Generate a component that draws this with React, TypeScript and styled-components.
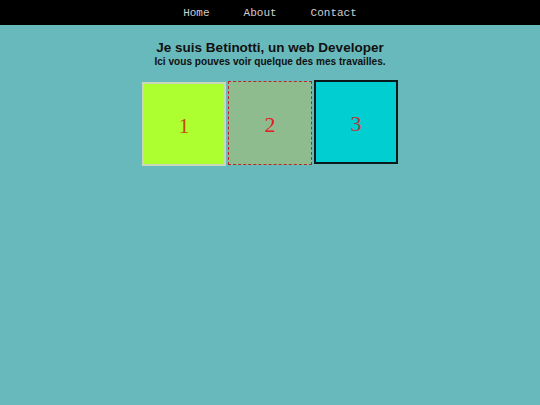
import React from "react";
import styled, { createGlobalStyle } from "styled-components";

const Global = createGlobalStyle`
  html, body { margin: 0; padding: 0; }
  body { background: #68b9bb; font-family: "Liberation Sans", Arial, sans-serif; }
`;

const Header = styled.header`
  background: #000;
  height: 25px;
  display: flex;
  justify-content: center;
  align-items: center;
`;

const NavLink = styled.a`
  font-family: "Liberation Mono", "Courier New", monospace;
  font-size: 11px;
  color: #cfcfcf;
  text-decoration: none;
  padding: 0 17px;
`;

const Intro = styled.section`
  display: flex;
  flex-direction: column;
  align-items: center;
  padding-top: 15px;
`;

const Title = styled.h1`
  margin: 0;
  font-size: 13.5px;
  font-weight: bold;
  color: #111;
  line-height: 16px;
`;

const Subtitle = styled.p`
  margin: 0;
  font-size: 10.1px;
  font-weight: bold;
  color: #111;
  line-height: 12px;
`;

const Gallery = styled.div`
  display: flex;
  justify-content: center;
  align-items: flex-start;
  gap: 2px;
  margin-top: 12px;
`;

type Variant = "lime" | "sage" | "cyan";

const styles: Record<Variant, { bg: string; border: string; color: string; top: number }> = {
  lime: { bg: "#adff2f", border: "2px solid #c9d8b8", color: "#c84a10", top: 2 },
  sage: { bg: "#8fbc8f", border: "1px dashed #b82828", color: "#e02020", top: 1 },
  cyan: { bg: "#00ced1", border: "2px solid #0a1a1a", color: "#b83a3a", top: 0 },
};

const Box = styled.div<{ $v: Variant }>`
  box-sizing: border-box;
  width: 84px;
  height: 84px;
  margin-top: ${(p) => styles[p.$v].top}px;
  background: ${(p) => styles[p.$v].bg};
  border: ${(p) => styles[p.$v].border};
  color: ${(p) => styles[p.$v].color};
  display: flex;
  align-items: center;
  justify-content: center;
  font-family: "Liberation Serif", "Times New Roman", serif;
  font-size: 22px;
  padding-top: 4px;
`;

export default function App() {
  return (
    <>
      <Global />
      <Header>
        <NavLink href="#">Home</NavLink>
        <NavLink href="#">About</NavLink>
        <NavLink href="#">Contact</NavLink>
      </Header>
      <Intro>
        <Title>Je suis Betinotti, un web Developer</Title>
        <Subtitle>Ici vous pouves voir quelque des mes travailles.</Subtitle>
      </Intro>
      <Gallery>
        <Box $v="lime">1</Box>
        <Box $v="sage">2</Box>
        <Box $v="cyan">3</Box>
      </Gallery>
    </>
  );
}
